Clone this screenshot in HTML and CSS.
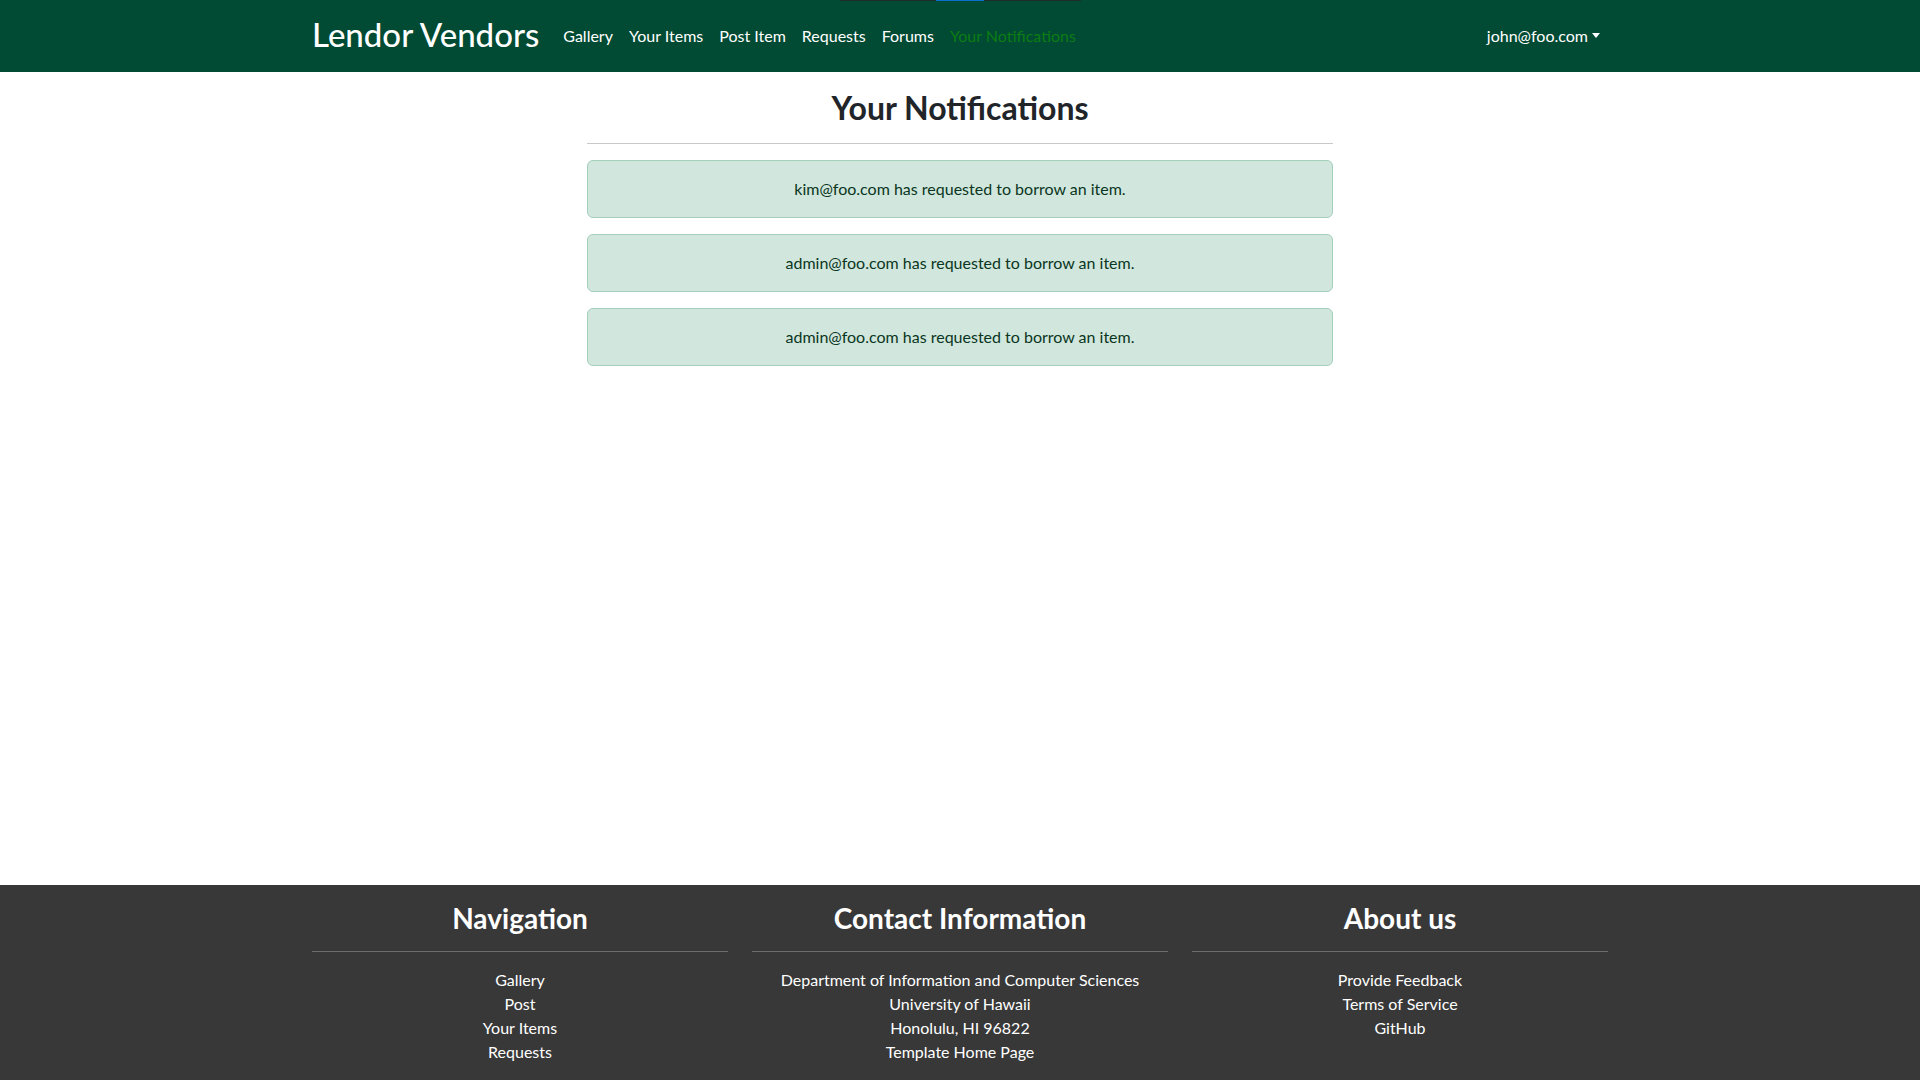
FILE: index.html
```html
<!DOCTYPE html>
<html lang="en">
<head>
<meta charset="utf-8">
<title>Lendor Vendors</title>
<link rel="stylesheet" href="styles.css">
</head>
<body>
<div class="loader"><span class="loader-fill"></span></div>
<nav class="navbar">
  <div class="container nav-inner">
    <a class="brand" href="#">Lendor Vendors</a>
    <ul class="nav-links">
      <li><a href="#">Gallery</a></li>
      <li><a href="#">Your Items</a></li>
      <li><a href="#">Post Item</a></li>
      <li><a href="#">Requests</a></li>
      <li><a href="#">Forums</a></li>
      <li><a class="active" href="#">Your Notifications</a></li>
    </ul>
    <a class="user" href="#">john@foo.com<span class="caret"></span></a>
  </div>
</nav>
<main class="container main">
  <div class="col-main">
    <h2 class="page-title">Your Notifications</h2>
    <hr class="rule">
    <div class="alert">kim@foo.com has requested to borrow an item.</div>
    <div class="alert">admin@foo.com has requested to borrow an item.</div>
    <div class="alert">admin@foo.com has requested to borrow an item.</div>
  </div>
</main>
<footer class="footer">
  <div class="container footer-grid">
    <div class="fcol">
      <h3>Navigation</h3>
      <hr class="frule">
      <a href="#">Gallery</a>
      <a href="#">Post</a>
      <a href="#">Your Items</a>
      <a href="#">Requests</a>
    </div>
    <div class="fcol">
      <h3>Contact Information</h3>
      <hr class="frule">
      <span>Department of Information and Computer Sciences</span>
      <span>University of Hawaii</span>
      <span>Honolulu, HI 96822</span>
      <a href="#">Template Home Page</a>
    </div>
    <div class="fcol">
      <h3>About us</h3>
      <hr class="frule">
      <a href="#">Provide Feedback</a>
      <a href="#">Terms of Service</a>
      <a href="#">GitHub</a>
    </div>
  </div>
</footer>
</body>
</html>
```

FILE: styles.css
```css
* { box-sizing: border-box; }
html, body { margin: 0; padding: 0; }
body {
  font-family: Lato, "Open Sans", "Liberation Sans", sans-serif;
  font-size: 16px;
  line-height: 1.5;
  color: #212529;
  background: #fff;
  min-height: 100vh;
  display: flex;
  flex-direction: column;
}
a { text-decoration: none; }
.container {
  width: 1320px;
  margin: 0 auto;
  padding: 0 12px;
}
.loader {
  position: absolute;
  top: 0;
  left: 840px;
  width: 241px;
  height: 1px;
  background: #1f2b27;
}
.loader-fill {
  position: absolute;
  left: 96px;
  width: 48px;
  height: 1px;
  background: #0a6fd0;
}
.navbar {
  background: #014a33;
  height: 72px;
  display: flex;
  align-items: center;
}
.nav-inner {
  display: flex;
  align-items: center;
}
.brand {
  color: #fff;
  font-size: 33px;
  font-weight: 500;
  line-height: 48px;
  margin-right: 16px;
  margin-top: -4px;
}
.nav-links {
  display: flex;
  list-style: none;
  margin: 0;
  padding: 0;
  flex: 1;
}
.nav-links a {
  display: block;
  padding: 8px;
  color: #fff;
  font-size: 16px;
  line-height: 24px;
}
.nav-links a.active { color: #0b7d14; }
.user {
  color: #fff;
  padding: 8px;
  line-height: 24px;
}
.caret {
  display: inline-block;
  margin-left: 4px;
  vertical-align: 4px;
  border-top: 5px solid #fff;
  border-left: 4px solid transparent;
  border-right: 4px solid transparent;
}
.main {
  padding-top: 17px;
  padding-bottom: 16px;
  display: flex;
  justify-content: center;
}
.col-main {
  width: 746px;
}
.page-title {
  margin: 0;
  text-align: center;
  font-size: 32px;
  font-weight: 700;
  line-height: 38px;
  color: #212529;
}
.rule {
  border: 0;
  border-top: 1px solid #c8c9ca;
  margin: 16px 0;
}
.alert {
  background: #d1e7dd;
  border: 1px solid #a3cfbb;
  border-radius: 6px;
  color: #0a3622;
  padding: 16px;
  text-align: center;
  margin-bottom: 16px;
}
.footer {
  margin-top: auto;
  background: #383838;
  color: #fff;
  padding: 16px 0;
}
.footer-grid {
  display: grid;
  grid-template-columns: repeat(3, 1fr);
  column-gap: 24px;
  padding: 0 12px;
}
.fcol {
  display: flex;
  flex-direction: column;
  align-items: center;
  text-align: center;
}
.fcol h3 {
  margin: 0;
  font-size: 28px;
  font-weight: 700;
  line-height: 34px;
}
.frule {
  align-self: stretch;
  border: 0;
  border-top: 1px solid #6d6d6d;
  margin: 16px 0;
}
.fcol a, .fcol span {
  color: #fff;
  line-height: 24px;
}
```
